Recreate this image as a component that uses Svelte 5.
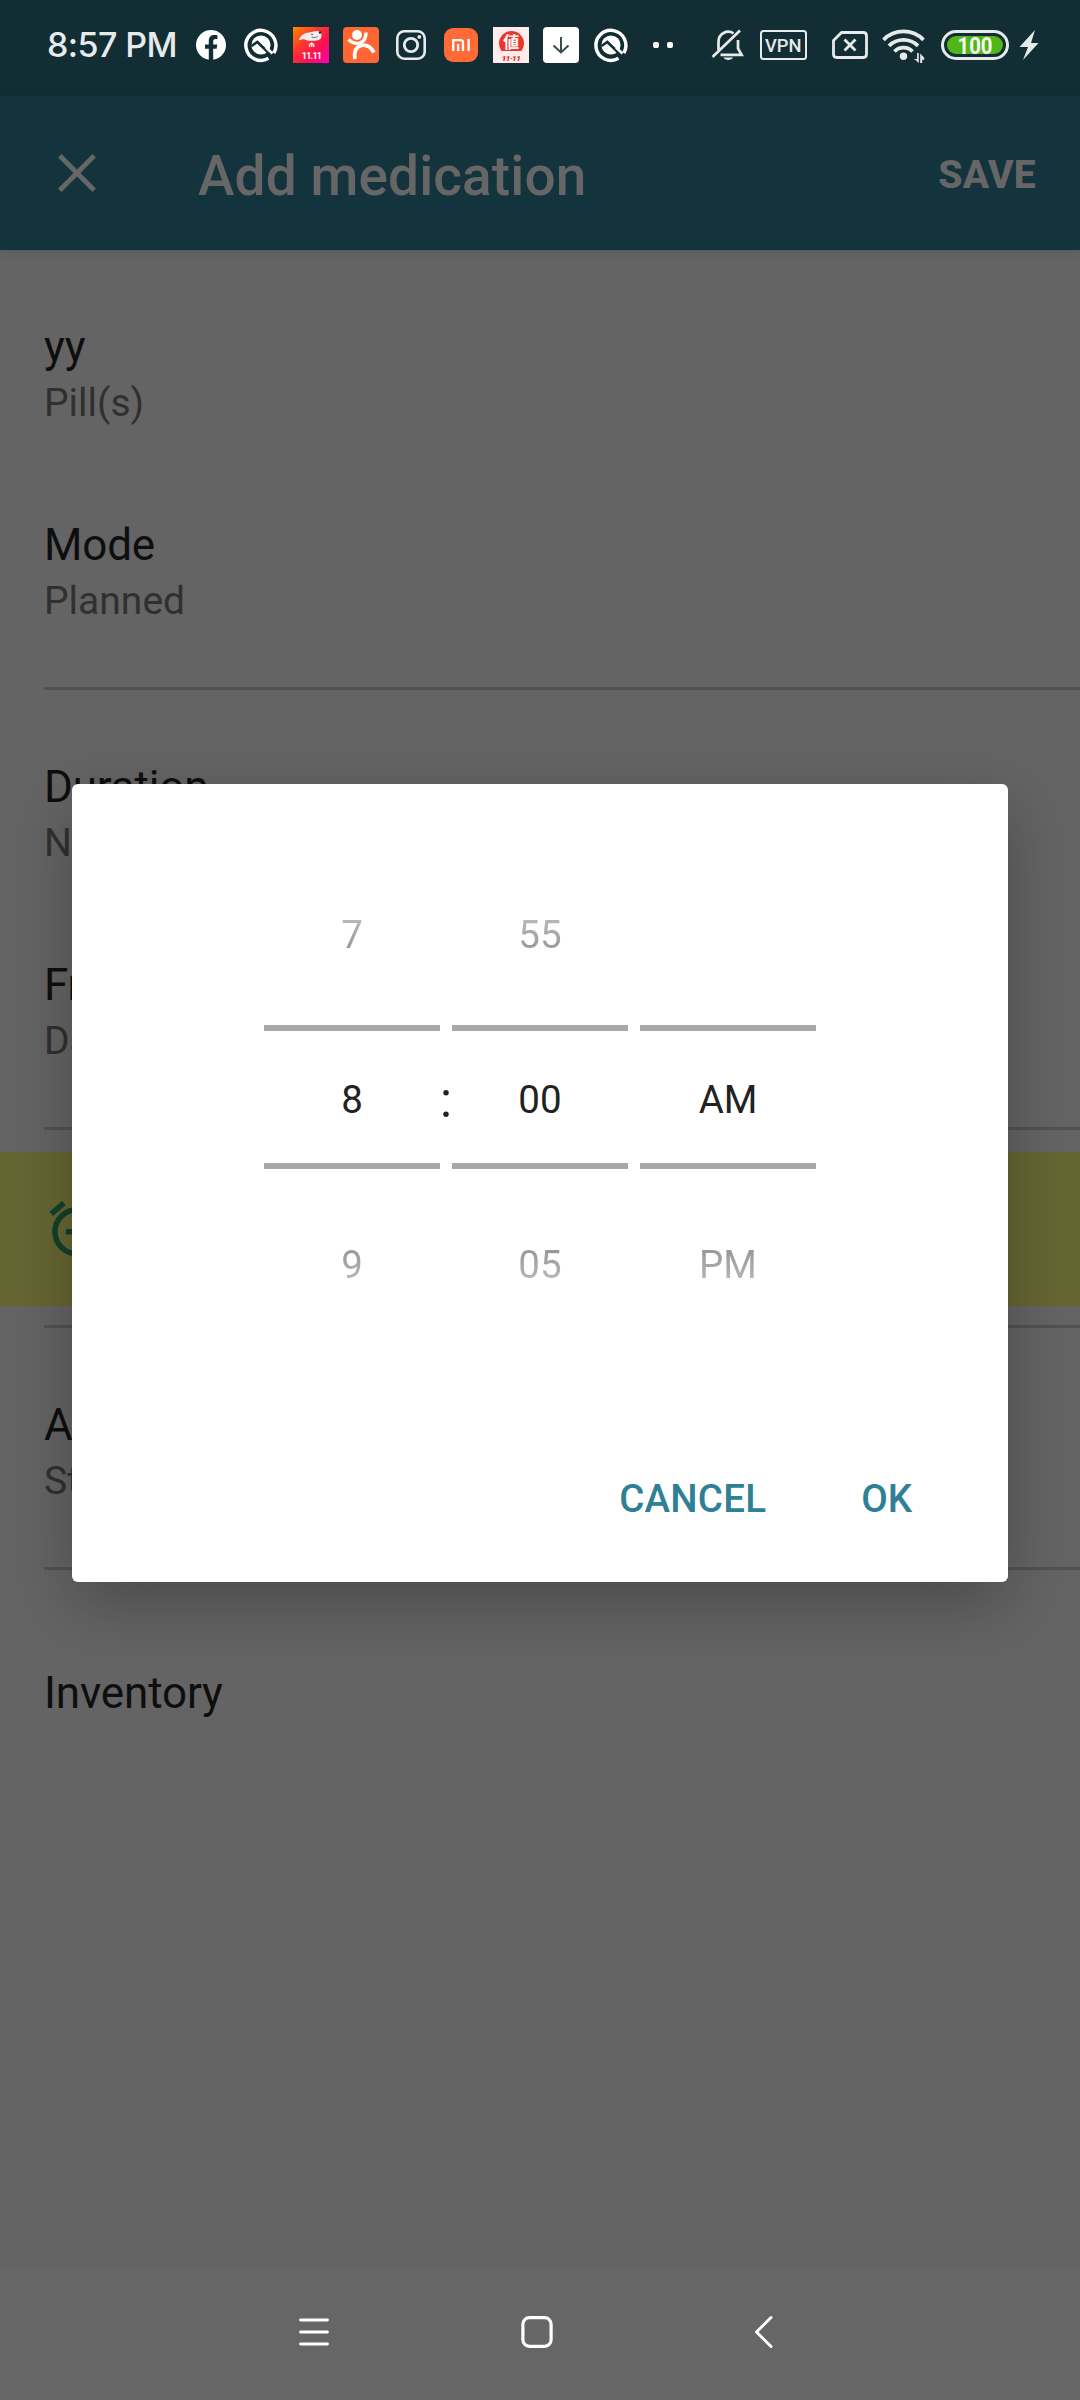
<script>
  const hours = ['7', '8', '9'];
  const minutes = ['55', '00', '05'];
  const periods = ['', 'AM', 'PM'];
  const columns = [hours, minutes, periods];
</script>

{#snippet row(title, sub)}
  <div class="row">
    <div class="row-title">{title}</div>
    <div class="row-sub">{sub}</div>
  </div>
{/snippet}

{#snippet target()}
  <svg class="app" viewBox="0 0 36 36">
    <path d="M25.500 31.300A15 15 0 1 1 30.800 26" fill="none" stroke="#fff" stroke-width="3.500" />
    <circle cx="18" cy="18" r="9.600" fill="#fff" />
    <path d="M8.500 19 L14.300 15 L28.500 28.500" fill="none" stroke="#122e34" stroke-width="2.600" />
    <path d="M23 20.500 L29.500 26.500" stroke="#fff" stroke-width="2.600" />
  </svg>
{/snippet}

<div class="screen">
  <div class="status">
    <div class="clock">8:57 PM</div>
    <div class="apps">
      <svg class="app" viewBox="0 0 36 36">
        <circle cx="18" cy="18" r="15" fill="#fff" />
        <path d="M15.800 33.200V21.800H12v-4.400h3.800V14c0-3.900 2.200-5.900 5.700-5.900 1.400 0 2.900.2 2.900.2v3.700h-1.800c-1.800 0-2.400 1-2.400 2.200v3.200h4.100l-.7 4.400h-3.400v11.400z" fill="#122e34" />
      </svg>
      {@render target()}
      <svg class="app" viewBox="0 0 36 36">
        <defs>
          <linearGradient id="sale" x1="0" y1="0" x2="1" y2="1">
            <stop offset="0" stop-color="#ff8a00" />
            <stop offset=".35" stop-color="#ff3a2a" />
            <stop offset=".65" stop-color="#fb1150" />
            <stop offset="1" stop-color="#ff00b4" />
          </linearGradient>
        </defs>
        <rect width="36" height="36" fill="url(#sale)" />
        <path d="M6 13c1-4 5-7 10-7.500 3-.3 4-1.500 8-1.500 3 0 4.500 1.500 4.500 4.500 0 3-1.500 4.500-5 5-5 .7-10 .3-13-1.600-1.500.3-2.500 1.200-4.500 1.100z" fill="#f4eeee" />
        <circle cx="19" cy="7.500" r=".8" fill="#444" /><circle cx="27" cy="5.500" r="1.200" fill="#222" />
        <path d="M18.500 10.300q3 1.200 6-.8" fill="none" stroke="#555" stroke-width=".8" />
        <path d="M16.500 20v-2.500l2.200-1.500 2 1.500V20M18.700 16v4" fill="none" stroke="#fff" stroke-width="1.300" />
        <text x="18.500" y="31.500" text-anchor="middle" class="sale-text">11.11</text>
      </svg>
      <svg class="app" viewBox="0 0 36 36">
        <rect width="36" height="36" rx="4" fill="#ff6633" />
        <circle cx="14" cy="8" r="5" fill="#fff" />
        <path d="M5.500 12.500C9 16 14 17.500 18 15.500c3.500-1.700 5-5 5-10" fill="none" stroke="#fff" stroke-width="3.400" />
        <path d="M12 32c-1.500-6 .5-12 6-13.500 5.500-1.300 10 2 13 7" fill="none" stroke="#fff" stroke-width="3.800" />
      </svg>
      <svg class="app" viewBox="0 0 36 36">
        <g fill="none" stroke="#e8ebeb">
          <rect x="4.300" y="4.300" width="27.400" height="27.400" rx="7" stroke-width="2.600" />
          <circle cx="18" cy="18" r="6.700" stroke-width="2.800" />
        </g>
        <circle cx="26.300" cy="9.900" r="1.900" fill="#e8ebeb" />
      </svg>
      <svg class="app" viewBox="0 0 36 36">
        <rect x="1" y="1" width="34" height="34" rx="9" fill="#ff6a36" />
        <path d="M10.200 24V13.200h7.300q2.500 0 2.500 2.500V24M15.100 17v7M25.600 12v12" fill="none" stroke="#fff" stroke-width="2.300" />
      </svg>
      <svg class="app" viewBox="0 0 36 36">
        <rect width="36" height="36" fill="#fdeceb" />
        <path d="M8.500 24a12.500 12.500 0 1 1 20 0z" fill="#ee352c" />
        <text x="18.300" y="21" text-anchor="middle" class="deal">値</text>
        <text x="18" y="33.500" text-anchor="middle" class="deal-date">11·11</text>
      </svg>
      <svg class="app" viewBox="0 0 36 36">
        <rect width="36" height="36" rx="4" fill="#fff" />
        <path d="M18 10v15.500M10.500 18.500l7.500 7 7.500-7" fill="none" stroke="#3a4c52" stroke-width="2" />
      </svg>
      {@render target()}
      <svg class="app" viewBox="0 0 36 36">
        <rect x="10" y="15" width="6" height="6" rx="2" fill="#fff" /><rect x="24" y="15" width="6" height="6" rx="2" fill="#fff" />
      </svg>
    </div>
    <div class="system">
      <svg class="bell" viewBox="0 0 34 36">
        <g fill="none" stroke="#e6eaea" stroke-width="2.700">
          <path d="M7.500 23.500V14.500A9.800 9.800 0 0 1 22.500 6.300" />
          <path d="M27 13v8.500l3.600 6.300H9.500" />
          <path d="M1.500 30 29 3.500" />
        </g>
        <path d="M12.500 30.500h9.500c-1 3.300-8.500 3.300-9.500 0z" fill="#e6eaea" />
      </svg>
      <svg class="vpn" viewBox="0 0 47 30">
        <rect x="1" y="1" width="45" height="28" rx="2.500" fill="none" stroke="#e6eaea" stroke-width="2" />
        <text x="5" y="21.700" textLength="36.500" lengthAdjust="spacingAndGlyphs">VPN</text>
      </svg>
      <svg class="sim" viewBox="0 0 36 36">
        <path d="M9.500 5.500h21.800q3.200 0 3.200 3.200v18.600q0 3.200-3.200 3.200H4.700q-3.200 0-3.200-3.200V13.500z" fill="none" stroke="#e6eaea" stroke-width="2.800" stroke-linejoin="round" />
        <path d="M12.500 12.500l11 11M23.500 12.500l-11 11" stroke="#e6eaea" stroke-width="2.800" />
      </svg>
      <svg class="wifi" viewBox="0 0 44 36">
        <g fill="none" stroke="#e6eaea" stroke-width="3.800">
          <path d="M1.500 12.800a28 28 0 0 1 40 0" />
          <path d="M7 18.800a20.500 20.500 0 0 1 29 0" />
          <path d="M12.500 24.500a12.600 12.600 0 0 1 18 0" />
        </g>
        <circle cx="21.500" cy="29.300" r="3.700" fill="#e6eaea" />
        <path d="M33.500 33l3.300 3V26h-1.700v6h-3.300zM38.200 36V26.500l4 4.200v2h-2V36z" fill="#e6eaea" />
      </svg>
      <svg class="battery" viewBox="0 0 68 30">
        <rect x="1.500" y="1.500" width="65" height="27" rx="13.500" fill="none" stroke="#e6eaea" stroke-width="3" />
        <rect x="6" y="6" width="56" height="18" rx="9" fill="#50b61a" />
        <text x="16.500" y="23.800" textLength="35" lengthAdjust="spacingAndGlyphs">100</text>
      </svg>
      <svg class="bolt" viewBox="0 0 20 30">
        <path d="M16 0 .5 17H9L4 30 19.500 13H12z" fill="#e6eaea" />
      </svg>
    </div>
  </div>

  <header class="appbar">
    <svg class="close" viewBox="0 0 38 38"><path d="M1.800 1.800l34.400 34.400M36.200 1.800L1.800 36.200" stroke="#666" stroke-width="4.800" /></svg>
    <h1>Add medication</h1>
    <button class="save">SAVE</button>
  </header>

  <main>
    {@render row('yy', 'Pill(s)')}
    {@render row('Mode', 'Planned')}
    <hr />
    {@render row('Duration', 'No end date')}
    {@render row('Frequency', 'Daily')}
    <hr />
    <div class="alarm">
      <svg viewBox="0 0 24 24">
        <path fill="#12412a" d="M7.880 3.390L6.600 1.860 2 5.710l1.290 1.530 4.590-3.850zM22 5.720l-4.600-3.860-1.290 1.530 4.600 3.860L22 5.720zM12 4c-4.970 0-9 4.030-9 9s4.020 9 9 9c4.970 0 9-4.030 9-9s-4.030-9-9-9zm0 16c-3.870 0-7-3.130-7-7s3.130-7 7-7 7 3.130 7 7-3.130 7-7 7zm1-11h-2v3H8v2h3v3h2v-3h3v-2h-3V9z" />
      </svg>
    </div>
    <hr />
    {@render row('Alarm', 'Standard')}
    <hr />
    <div class="row single"><div class="row-title">Inventory</div></div>
  </main>

  <nav>
    <svg viewBox="0 0 34 34"><path d="M3.500 5h27M3.500 17h27M3.500 29h27" stroke="#fff" stroke-width="2.800" stroke-linecap="round" /></svg>
    <svg viewBox="0 0 34 34"><rect x="2.900" y="2.700" width="28.200" height="28.600" rx="6.500" fill="none" stroke="#fff" stroke-width="3.200" /></svg>
    <svg viewBox="0 0 34 34"><path d="M25 2.500 10.500 17 25 31.500" fill="none" stroke="#fff" stroke-width="3" stroke-linecap="round" stroke-linejoin="round" /></svg>
  </nav>

  <div class="dialog" role="dialog">
    <div class="picker">
      {#each columns as [before, current, after], i}
        <div class="column">
          <div class="value before">{before}</div>
          <div class="selected"><div class="value">{current}</div></div>
          <div class="value after">{after}</div>
        </div>
        {#if i < 2}
          <div class="gap">{#if i === 0}:{/if}</div>
        {/if}
      {/each}
    </div>
    <div class="actions">
      <button>CANCEL</button>
      <button>OK</button>
    </div>
  </div>
</div>

<style>
  :global(body) { background: #646464; }
  * { box-sizing: border-box; }
  .screen {
    position: relative;
    width: 1080px;
    height: 2400px;
    display: flex;
    flex-direction: column;
    overflow: hidden;
    background: #646464;
    font-family: Roboto, "Liberation Sans", sans-serif;
  }
  svg { display: block; flex: none; overflow: visible; }
  button { border: 0; padding: 0; background: none; font-family: inherit; }

  .status {
    height: 96px;
    flex: none;
    display: flex;
    align-items: center;
    padding: 0 41px 6px 47px;
    background: #122e34;
  }
  .clock {
    width: 146px;
    color: #e8ebeb;
    font: 550 34px/40px Inter, sans-serif;
    letter-spacing: -.6px;
    white-space: nowrap;
  }
  .apps { display: flex; gap: 14px; }
  .app { width: 36px; height: 36px; }
  .sale-text { font: 700 9px Roboto, sans-serif; letter-spacing: -.8px; fill: #fff; }
  .deal { font: 700 16px "Noto Sans CJK JP", sans-serif; fill: #fff; }
  .deal-date { font: italic 900 8px Roboto, sans-serif; letter-spacing: -.4px; fill: #e22; }
  .system { display: flex; align-items: center; margin-left: auto; }
  .bell { width: 34px; height: 36px; margin-right: 15px; }
  .vpn { width: 47px; height: 30px; margin-right: 25px; }
  .vpn text { font: 500 19px Roboto, sans-serif; fill: #e6eaea; }
  .sim { width: 36px; height: 36px; margin-right: 14px; }
  .wifi { width: 44px; height: 36px; margin-right: 15px; }
  .battery { width: 68px; height: 30px; margin-right: 10px; }
  .battery text { font: 700 24.500px Roboto, sans-serif; fill: #f4f8f0; }
  .bolt { width: 20px; height: 30px; }

  .appbar {
    height: 154px;
    flex: none;
    display: flex;
    align-items: center;
    padding: 0 44px 0 58px;
    background: #14343d;
    color: #666;
    z-index: 1;
    box-shadow: 0 2px 10px rgba(0, 0, 0, .12);
  }
  .close { width: 38px; height: 38px; }
  h1 {
    margin: 0 0 0 102px;
    padding-top: 5px;
    font-size: 55px;
    font-weight: 500;
    line-height: 64px;
    letter-spacing: .1px;
  }
  .save {
    margin-left: auto;
    padding-top: 3px;
    color: #666;
    font-size: 39px;
    font-weight: 800;
    line-height: 46px;
    letter-spacing: .3px;
  }

  main { flex: 1; padding-top: 22px; }
  .row { height: 198px; padding: 49px 44px 0; }
  .row-title { color: #0e0e0e; font-size: 44px; line-height: 52px; letter-spacing: -.15px; }
  .row-sub { margin-top: 7px; color: #303030; font-size: 39px; line-height: 46px; }
  .row.single { padding-top: 75px; }
  hr { height: 3px; margin: 19px 0 22px 44px; border: 0; background: #525252; }
  .alarm { height: 154px; padding: 44px; background: #666633; }
  .alarm svg { width: 66px; height: 66px; }

  nav {
    height: 130px;
    flex: none;
    display: flex;
    align-items: center;
    gap: 189px;
    padding: 0 0 6px 297px;
    background: #666;
  }
  nav svg { width: 34px; height: 34px; }
  nav svg:last-child { margin-left: 3px; }

  .dialog {
    position: absolute;
    z-index: 2;
    left: 72px;
    top: 784px;
    width: 936px;
    height: 798px;
    padding-top: 128px;
    border-radius: 6px;
    background: #fff;
    box-shadow: 0 22px 66px rgba(0, 0, 0, .26);
  }
  .picker { display: flex; justify-content: center; color: #222; font-size: 38.500px; line-height: 46px; }
  .column { width: 176px; text-align: center; }
  .value { height: 46px; }
  .selected {
    height: 144px;
    margin: 67px 0 73px;
    padding-top: 46px;
    border: solid #a8a8a8;
    border-width: 6px 0;
  }
  .before, .after { color: transparent; background-clip: text; -webkit-background-clip: text; }
  .before { background-image: linear-gradient(#bbb 10%, #949494 90%); }
  .after { background-image: linear-gradient(#949494 10%, #bbb 90%); }
  .gap {
    width: 12px;
    padding-top: 153px;
    display: flex;
    justify-content: center;
    font-size: 49.500px;
    line-height: 70px;
  }
  .actions { display: flex; justify-content: flex-end; gap: 95px; margin-top: 188px; padding-right: 96px; }
  .actions button { color: #2f8095; font-size: 38.500px; font-weight: 500; line-height: 46px; }
  .actions button:first-child { letter-spacing: .2px; }
</style>
